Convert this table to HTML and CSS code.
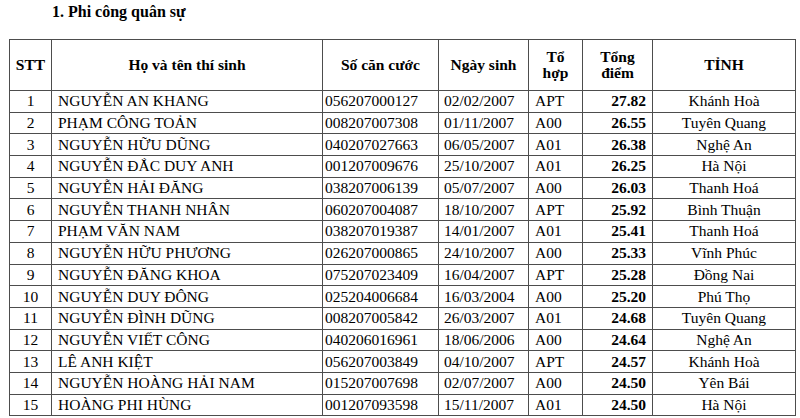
FILE: index.html
```html
<!DOCTYPE html>
<html lang="vi">
<head>
<meta charset="utf-8">
<title>Phi công quân sự</title>
<link rel="stylesheet" href="styles.css">
</head>
<body>
<div class="page">
  <h1 class="title">1. Phi công quân sự</h1>
  <table class="list">
    <colgroup>
      <col class="c-stt"><col class="c-name"><col class="c-id"><col class="c-date"><col class="c-grp"><col class="c-score"><col class="c-prov">
    </colgroup>
    <thead>
      <tr>
        <th>STT</th>
        <th>Họ và tên thí sinh</th>
        <th>Số căn cước</th>
        <th>Ngày sinh</th>
        <th>Tổ<br>hợp</th>
        <th>Tổng<br>điểm</th>
        <th>TỈNH</th>
      </tr>
    </thead>
    <tbody>
      <tr><td class="stt">1</td><td class="name">NGUYỄN AN KHANG</td><td class="id">056207000127</td><td class="date">02/02/2007</td><td class="grp">APT</td><td class="score">27.82</td><td class="prov">Khánh Hoà</td></tr>
      <tr><td class="stt">2</td><td class="name">PHẠM CÔNG TOẢN</td><td class="id">008207007308</td><td class="date">01/11/2007</td><td class="grp">A00</td><td class="score">26.55</td><td class="prov">Tuyên Quang</td></tr>
      <tr><td class="stt">3</td><td class="name">NGUYỄN HỮU DŨNG</td><td class="id">040207027663</td><td class="date">06/05/2007</td><td class="grp">A01</td><td class="score">26.38</td><td class="prov">Nghệ An</td></tr>
      <tr><td class="stt">4</td><td class="name">NGUYỄN ĐẮC DUY ANH</td><td class="id">001207009676</td><td class="date">25/10/2007</td><td class="grp">A01</td><td class="score">26.25</td><td class="prov">Hà Nội</td></tr>
      <tr><td class="stt">5</td><td class="name">NGUYỄN HẢI ĐĂNG</td><td class="id">038207006139</td><td class="date">05/07/2007</td><td class="grp">A00</td><td class="score">26.03</td><td class="prov">Thanh Hoá</td></tr>
      <tr><td class="stt">6</td><td class="name">NGUYỄN THANH NHÂN</td><td class="id">060207004087</td><td class="date">18/10/2007</td><td class="grp">APT</td><td class="score">25.92</td><td class="prov">Bình Thuận</td></tr>
      <tr><td class="stt">7</td><td class="name">PHẠM VĂN NAM</td><td class="id">038207019387</td><td class="date">14/01/2007</td><td class="grp">A01</td><td class="score">25.41</td><td class="prov">Thanh Hoá</td></tr>
      <tr><td class="stt">8</td><td class="name">NGUYỄN HỮU PHƯƠNG</td><td class="id">026207000865</td><td class="date">24/10/2007</td><td class="grp">A00</td><td class="score">25.33</td><td class="prov">Vĩnh Phúc</td></tr>
      <tr><td class="stt">9</td><td class="name">NGUYỄN ĐĂNG KHOA</td><td class="id">075207023409</td><td class="date">16/04/2007</td><td class="grp">APT</td><td class="score">25.28</td><td class="prov">Đồng Nai</td></tr>
      <tr><td class="stt">10</td><td class="name">NGUYỄN DUY ĐÔNG</td><td class="id">025204006684</td><td class="date">16/03/2004</td><td class="grp">A00</td><td class="score">25.20</td><td class="prov">Phú Thọ</td></tr>
      <tr><td class="stt">11</td><td class="name">NGUYỄN ĐÌNH DŨNG</td><td class="id">008207005842</td><td class="date">26/03/2007</td><td class="grp">A01</td><td class="score">24.68</td><td class="prov">Tuyên Quang</td></tr>
      <tr><td class="stt">12</td><td class="name">NGUYỄN VIẾT CÔNG</td><td class="id">040206016961</td><td class="date">18/06/2006</td><td class="grp">A00</td><td class="score">24.64</td><td class="prov">Nghệ An</td></tr>
      <tr><td class="stt">13</td><td class="name">LÊ ANH KIỆT</td><td class="id">056207003849</td><td class="date">04/10/2007</td><td class="grp">APT</td><td class="score">24.57</td><td class="prov">Khánh Hoà</td></tr>
      <tr><td class="stt">14</td><td class="name">NGUYỄN HOÀNG HẢI NAM</td><td class="id">015207007698</td><td class="date">02/07/2007</td><td class="grp">A00</td><td class="score">24.50</td><td class="prov">Yên Bái</td></tr>
      <tr><td class="stt">15</td><td class="name">HOÀNG PHI HÙNG</td><td class="id">001207093598</td><td class="date">15/11/2007</td><td class="grp">A01</td><td class="score">24.50</td><td class="prov">Hà Nội</td></tr>
    </tbody>
  </table>
</div>
</body>
</html>
```
FILE: styles.css
```css
html, body {
  margin: 0;
  padding: 0;
  background: #ffffff;
}
body {
  font-family: "Liberation Serif", "Times New Roman", serif;
  color: #000000;
}
.page {
  padding: 0 0 0 9px;
}
.title {
  margin: 0 0 18px 0;
  padding: 3px 0 0 43px;
  font-size: 16px;
  line-height: 18px;
  font-weight: bold;
}
.list {
  border-collapse: collapse;
  table-layout: fixed;
  width: 786px;
  font-size: 15.5px;
}
.c-stt { width: 42px; }
.c-name { width: 271px; }
.c-id { width: 116px; }
.c-date { width: 90px; }
.c-grp { width: 54px; }
.c-score { width: 70px; }
.c-prov { width: 143px; }
.list th,
.list td {
  border: 1px solid #4d4d4d;
  padding: 0;
  white-space: nowrap;
  overflow: hidden;
}
.list th {
  height: 50px;
  font-weight: bold;
  line-height: 16px;
  text-align: center;
  vertical-align: middle;
}
.list td {
  height: 20.7px;
  line-height: 18px;
  vertical-align: middle;
}
.stt { text-align: center; }
.name { padding-left: 6px !important; }
.id { padding-left: 2px !important; }
.date { padding-left: 5px !important; }
.grp { padding-left: 6px !important; }
.score {
  text-align: right;
  font-weight: bold;
  padding-right: 6px !important;
}
.prov { text-align: center; }
```
